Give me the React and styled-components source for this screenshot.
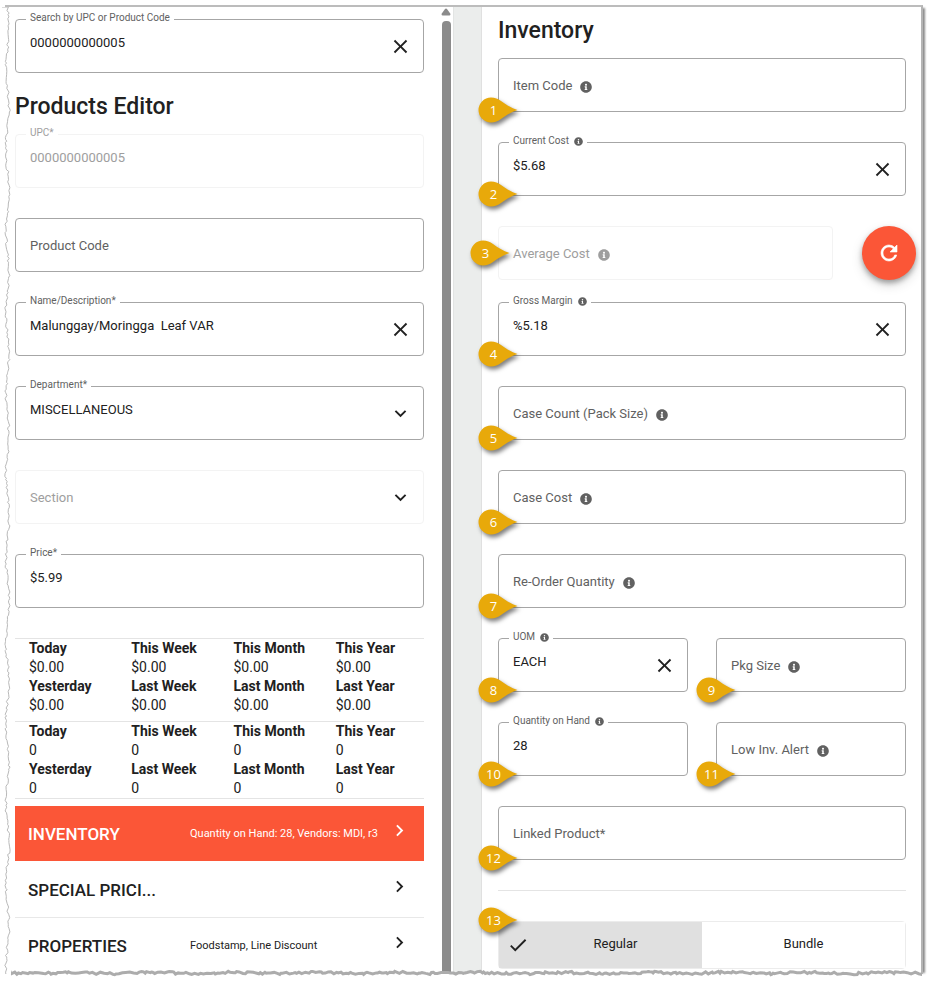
import React, { useState } from 'react';
import styled, { createGlobalStyle, css } from 'styled-components';
import { MdCheck, MdChevronRight, MdClose, MdExpandMore, MdRefresh } from 'react-icons/md';
import { FaInfoCircle } from 'react-icons/fa';

const money = [
	{ heads: ['Today', 'This Week', 'This Month', 'This Year'], values: ['$0.00', '$0.00', '$0.00', '$0.00'] },
	{ heads: ['Yesterday', 'Last Week', 'Last Month', 'Last Year'], values: ['$0.00', '$0.00', '$0.00', '$0.00'] }
];

const units = [
	{ heads: ['Today', 'This Week', 'This Month', 'This Year'], values: ['0', '0', '0', '0'] },
	{ heads: ['Yesterday', 'Last Week', 'Last Month', 'Last Year'], values: ['0', '0', '0', '0'] }
];

const sections = [
	{ title: 'INVENTORY', note: 'Quantity on Hand: 28, Vendors: MDI, r3', active: true },
	{ title: 'SPECIAL PRICI...', note: '' },
	{ title: 'PROPERTIES', note: 'Foodstamp, Line Discount' }
];

// ragged line for the paper edge, [distance along the edge, depth]
const ragged = (length, wave, middle) => {
	const points = [];
	let seed = 17;
	const next = () => {
		seed = (seed * 9301 + 49297) % 233280;
		return seed / 233280;
	};
	for (let at = 0; at < length; at += 1 + next() * 3) {
		points.push([at.toFixed(1), (middle + Math.sin(at / 13) * wave + (next() - 0.5) * 2.4).toFixed(1)]);
	}
	return points;
};

const leftEdge = `M-4 0 L${ragged(3000, 1.6, 5.5).map(([at, d]) => `${d} ${at}`).join(' L')} L-4 3000 Z`;
const bottomEdge = `M-4 30 L-4 -4 L${ragged(3000, 0.6, 5).map(([at, d]) => `${at} ${d}`).join(' L')} L3000 30 Z`;

function Callout({ number, place }) {
	return (
		<StyledCallout $place={place}>
			<svg width="40" height="26" viewBox="0 0 40 26" aria-hidden="true">
				<path d="M13 .5C17 .5 20 1.8 23 4C28 7.8 33 10.8 39.500 13C33 15.2 28 18.200 23 22C20 24.200 17 25.500 13 25.500A12.500 12.500 0 0 1 13 .5Z" fill="#e8a90a" />
			</svg>
			<span>{number}</span>
		</StyledCallout>
	);
}

function Field({ id, label, value, info, disabled, clearable, options, callout, calloutPlace }) {
	const floated = value !== undefined;
	return (
		<StyledField $disabled={disabled}>
			<StyledLabel htmlFor={id} $floated={floated} $disabled={disabled}>
				{label}
				{info && <FaInfoCircle />}
			</StyledLabel>
			{options ? (
				<React.Fragment>
					<StyledSelect id={id} defaultValue={value} disabled={disabled}>
						{options.map((option) => <option key={option}>{option}</option>)}
					</StyledSelect>
					<MdExpandMore size={23} />
				</React.Fragment>
			) : (
				<StyledInput id={id} type="text" defaultValue={value} disabled={disabled} />
			)}
			{clearable && (
				<StyledClear type="button" aria-label={`Clear ${label}`}>
					<MdClose size={23} />
				</StyledClear>
			)}
			{callout && <Callout number={callout} place={calloutPlace} />}
		</StyledField>
	);
}

function Stats({ rows, label }) {
	return (
		<StyledStats aria-label={label}>
			<tbody>
				{rows.map((row) => (
					<React.Fragment key={row.heads[0]}>
						<tr>{row.heads.map((head) => <th key={head}>{head}</th>)}</tr>
						<tr>{row.values.map((value, index) => <td key={index}>{value}</td>)}</tr>
					</React.Fragment>
				))}
			</tbody>
		</StyledStats>
	);
}

function ProductsEditor() {
	return (
		<StyledEditor>
			<Field id="search" label="Search by UPC or Product Code" value="0000000000005" clearable />
			<StyledForm>
				<StyledHeading>Products Editor</StyledHeading>
				<StyledStack>
					<Field id="upc" label="UPC*" value="0000000000005" disabled />
					<Field id="code" label="Product Code" />
					<Field id="name" label="Name/Description*" value="Malunggay/Moringga  Leaf VAR" clearable />
					<Field id="department" label="Department*" value="MISCELLANEOUS" options={['MISCELLANEOUS']} />
					<Field id="section" label="Section" options={['']} disabled />
					<Field id="price" label="Price*" value="$5.99" />
				</StyledStack>
			</StyledForm>
			<StyledTotals>
				<Stats rows={money} label="Sales" />
				<Stats rows={units} label="Units" />
			</StyledTotals>
			<nav>
				{sections.map((section) => (
					<StyledSection type="button" key={section.title} $active={section.active}>
						<StyledSectionTitle>{section.title}</StyledSectionTitle>
						<StyledSectionNote>{section.note}</StyledSectionNote>
						<MdChevronRight size={23} />
					</StyledSection>
				))}
			</nav>
		</StyledEditor>
	);
}

function Inventory() {
	const [kind, setKind] = useState('Regular');
	return (
		<StyledInventory>
			<StyledHeading>Inventory</StyledHeading>
			<StyledStack>
				<Field id="item" label="Item Code" info callout={1} />
				<Field id="cost" label="Current Cost" value="$5.68" info clearable callout={2} />
				<StyledAverage>
					<Field id="average" label="Average Cost" info disabled callout={3} calloutPlace="middle" />
					<StyledRefresh type="button" aria-label="Recalculate average cost">
						<MdRefresh size={24} />
					</StyledRefresh>
				</StyledAverage>
				<Field id="margin" label="Gross Margin" value="%5.18" info clearable callout={4} />
				<Field id="count" label="Case Count (Pack Size)" info callout={5} />
				<Field id="caseCost" label="Case Cost" info callout={6} />
				<Field id="reorder" label="Re-Order Quantity" info callout={7} />
				<StyledPair>
					<Field id="uom" label="UOM" value="EACH" info clearable callout={8} />
					<Field id="pkg" label="Pkg Size" info callout={9} />
				</StyledPair>
				<StyledPair>
					<Field id="onHand" label="Quantity on Hand" value="28" info callout={10} />
					<Field id="low" label="Low Inv. Alert" info callout={11} />
				</StyledPair>
				<Field id="linked" label="Linked Product*" callout={12} />
				<StyledRule />
				<StyledToggle role="group" aria-label="Product type">
					{['Regular', 'Bundle'].map((name) => (
						<StyledToggleButton type="button" key={name} aria-pressed={kind === name} $on={kind === name} onClick={() => setKind(name)}>
							{kind === name && <MdCheck size={22} />}
							<span>{name}</span>
						</StyledToggleButton>
					))}
					<Callout number={13} place="top" />
				</StyledToggle>
			</StyledStack>
		</StyledInventory>
	);
}

export default function App() {
	return (
		<StyledPage>
			<GlobalStyle />
			<StyledFrame>
				<StyledColumns>
					<ProductsEditor />
					<StyledScrollbar aria-hidden="true">
						<svg width="10" height="8" viewBox="0 0 10 8">
							<path d="M5 .5Q5.600 .5 6 1L9.400 5.800Q9.800 7.500 8.500 7.500H1.500Q.2 7.500 .6 5.800L4 1Q4.400 .5 5 .5Z" fill="#8b8b8b" />
						</svg>
						<StyledThumb />
					</StyledScrollbar>
					<StyledGutter />
					<Inventory />
				</StyledColumns>
				<StyledLeftEdge aria-hidden="true">
					<path d={leftEdge} />
				</StyledLeftEdge>
				<StyledBottomEdge aria-hidden="true">
					<path d={bottomEdge} />
				</StyledBottomEdge>
			</StyledFrame>
		</StyledPage>
	);
}

const GlobalStyle = createGlobalStyle`
	* {
		box-sizing: border-box;
	}
	body {
		margin: 0;
		background-color: #ffffff;
		color: #212121;
		font-family: Roboto, sans-serif;
		font-size: 13px;
	}
	button,
	input,
	select {
		font: inherit;
		color: inherit;
	}
	button {
		cursor: pointer;
	}
`;

const StyledPage = styled.div`
	height: 100vh;
	padding: 5px 12px 10px 5px;
`;

const StyledFrame = styled.div`
	position: relative;
	height: 100%;
	border-top: 2px solid #bcbcbc;
	border-right: 2px solid #b4b4b4;
	box-shadow: 4px 1px 2px -2px #8c8c8c;
`;

const StyledColumns = styled.div`
	display: grid;
	grid-template-columns: 436fr 12px 29px 439fr;
	height: 100%;
	overflow: hidden;
`;

const StyledEditor = styled.section`
	min-width: 0;
	padding: 12px 17px 0 10px;
`;

const StyledInventory = styled.section`
	min-width: 0;
	padding: 10px 15px 0 16px;
	background-color: #ffffff;
`;

const StyledScrollbar = styled.div`
	display: flex;
	flex-direction: column;
	gap: 5px;
	padding-top: 1px;
`;

const StyledThumb = styled.div`
	flex: 1;
	width: 9px;
	margin-left: 1px;
	border-radius: 4px 4px 0 0;
	background-color: #8b8b8b;
`;

const StyledGutter = styled.div`
	border-left: 1px solid #e2e4e3;
	border-right: 1px solid #e0e0e0;
	background-color: #ebedec;
`;

const StyledHeading = styled.h1`
	margin: 0 0 13px;
	font-size: 23px;
	line-height: 28px;
	font-weight: 500;
`;

const StyledForm = styled.div`
	margin-top: 20px;
`;

const StyledStack = styled.div`
	display: flex;
	flex-direction: column;
	gap: 30px;
`;

const StyledPair = styled.div`
	display: grid;
	grid-template-columns: 1fr 1fr;
	gap: 28px;
`;

const StyledAverage = styled.div`
	display: flex;
	gap: 29px;
	margin: 0 -10px -8px 0;
`;

const StyledField = styled.div`
	position: relative;
	display: flex;
	flex: 1;
	align-items: center;
	min-width: 0;
	min-height: 54px;
	padding: 0 11px 0 14px;
	border: 1px solid ${(props) => (props.$disabled ? '#f3f3f3' : '#a6a6a6')};
	border-radius: 4px;

	> svg {
		pointer-events: none;
	}
`;

const StyledLabel = styled.label`
	display: flex;
	align-items: center;
	gap: 8px;
	padding-top: 2px;
	line-height: 18px;
	white-space: nowrap;
	color: ${(props) => (props.$disabled ? '#9e9e9e' : '#616161')};

	svg {
		width: 12px;
		height: 12px;
		margin-top: 2px;
	}

	${(props) =>
		props.$floated &&
		css`
			position: absolute;
			top: -9px;
			left: 10px;
			gap: 5px;
			padding: 0 4px;
			background-color: #ffffff;
			font-size: 10px;
			line-height: 14px;

			svg {
				width: 9px;
				height: 9px;
				margin-top: 0;
			}
		`};
`;

const control = css`
	flex: 1;
	min-width: 0;
	width: 100%;
	height: 52px;
	padding: 0 0 7px;
	border: 0;
	outline: 0;
	background: transparent;

	&:disabled {
		color: #9e9e9e;
		opacity: 1;
	}
`;

const StyledInput = styled.input`
	${control};
`;

const StyledSelect = styled.select`
	${control};
	appearance: none;
`;

const StyledClear = styled.button`
	display: flex;
	padding: 0;
	border: 0;
	background: none;
`;

const StyledCallout = styled.div`
	position: absolute;
	left: ${(props) => (props.$place === 'middle' ? '-29px' : '-21px')};
	bottom: ${(props) => ({ middle: '13px', top: '35px' }[props.$place] || '-12px')};
	z-index: 1;
	display: grid;
	align-items: center;
	color: #ffffff;
	font-family: 'Open Sans', sans-serif;
	font-size: 13px;
	line-height: 26px;

	> * {
		grid-area: 1 / 1;
	}
	svg {
		display: block;
		filter: drop-shadow(2px 3px 2px rgba(0, 0, 0, 0.5));
	}
	span {
		width: 31px;
		text-align: center;
		z-index: 1;
	}
`;

const StyledTotals = styled.div`
	margin: 30px 0 7px;
	border-bottom: 1px solid #e4e4e4;
`;

const StyledStats = styled.table`
	width: 100%;
	table-layout: fixed;
	border-collapse: separate;
	border-spacing: 0;
	border-top: 1px solid #e4e4e4;
	font-size: 14px;
	line-height: 19px;

	& + & {
		margin-top: 6px;
	}
	th,
	td {
		padding: 0 0 0 14px;
		text-align: left;
	}
	th {
		font-weight: 700;
	}
`;

const StyledSection = styled.button`
	display: flex;
	align-items: center;
	width: 100%;
	height: 56px;
	padding: 0 13px;
	border: 0;
	border-bottom: 1px solid ${(props) => (props.$active ? '#ffffff' : '#e8e8e8')};
	background-color: ${(props) => (props.$active ? '#fb5637' : 'transparent')};
	color: ${(props) => (props.$active ? '#ffffff' : '#212121')};
	text-align: left;

	svg {
		margin-bottom: 6px;
	}
`;

const StyledSectionTitle = styled.span`
	flex: 0 0 162px;
	white-space: nowrap;
	font-size: 17px;
	font-weight: 500;
`;

const StyledSectionNote = styled.span`
	flex: 1;
	font-size: 11px;
	white-space: nowrap;
`;

const StyledRefresh = styled.button`
	display: flex;
	align-items: center;
	justify-content: center;
	width: 54px;
	height: 54px;
	border: 0;
	border-radius: 50%;
	background-color: #fb5637;
	color: #ffffff;
	box-shadow: 0 3px 5px rgba(0, 0, 0, 0.3), 0 5px 12px rgba(0, 0, 0, 0.15);

	path:last-child {
		stroke: currentColor;
		stroke-width: 0.6;
	}
`;

const StyledRule = styled.hr`
	width: 100%;
	margin: 0;
	border: 0;
	border-top: 1px solid #e4e4e4;
`;

const StyledToggle = styled.div`
	position: relative;
	display: grid;
	grid-template-columns: 1fr 1fr;
	height: 48px;
	border: 1px solid #ececec;
	border-radius: 4px;
`;

const StyledToggleButton = styled.button`
	display: flex;
	align-items: center;
	padding: 0 0 0 ${(props) => (props.$on ? '8px' : '0')};
	border: 0;
	background-color: ${(props) => (props.$on ? '#e0e0e0' : '#ffffff')};

	span {
		flex: 1;
		padding-bottom: 3px;
		text-align: center;
	}
`;

const StyledLeftEdge = styled.svg`
	position: absolute;
	top: 0;
	left: -3px;
	width: 12px;
	height: 100%;
	pointer-events: none;
	fill: #ffffff;
	stroke: #b9b9b9;
`;

const StyledBottomEdge = styled.svg`
	position: absolute;
	bottom: -8px;
	left: 6px;
	width: calc(100% - 5px);
	height: 14px;
	pointer-events: none;
	fill: #ffffff;
	stroke: #acacac;
	stroke-width: 3;
`;
